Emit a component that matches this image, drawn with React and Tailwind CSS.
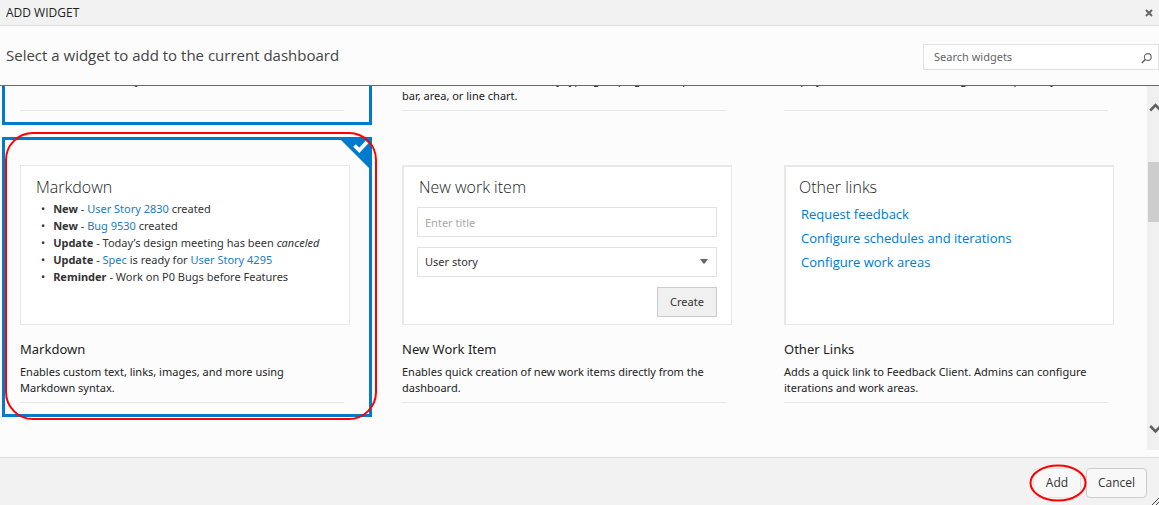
import { useLayoutEffect, useRef } from "react";

const linkClass = "text-[#1a7cc4] hover:underline";

function MarkdownPreview() {
  return (
    <div className="px-[15px] pt-[11px] text-[#333]">
      <h3 className="font-['Open_Sans'] text-base leading-5 font-light text-[#222]">Markdown</h3>
      <ul className="mt-[3px] text-[11px] leading-[17px] whitespace-nowrap [&>li]:flex [&>li]:gap-2 [&>li]:pl-[5px] [&>li]:before:content-['•']">
        <li>
          <span><b>New</b> - <a href="#story-2830" className={linkClass}>User Story 2830</a> created</span>
        </li>
        <li>
          <span><b>New</b> - <a href="#bug-9530" className={linkClass}>Bug 9530</a> created</span>
        </li>
        <li>
          <span><b>Update</b> - Today’s design meeting has been <i>canceled</i></span>
        </li>
        <li>
          <span>
            <b>Update</b> - <a href="#spec" className={linkClass}>Spec</a> is ready for{" "}
            <a href="#story-4295" className={linkClass}>User Story 4295</a>
          </span>
        </li>
        <li>
          <span><b>Reminder</b> - Work on P0 Bugs before Features</span>
        </li>
      </ul>
    </div>
  );
}

function WorkItemPreview() {
  return (
    <div className="flex flex-col pt-2.5 pr-3.5 pl-[13px] text-[11px] text-[#333]">
      <h3 className="pl-0.5 font-['Open_Sans'] text-base leading-5 font-light text-[#222]">New work item</h3>
      <input
        aria-label="Title"
        placeholder="Enter title"
        className="mt-2.5 h-[30px] border border-[#e2e2e2] bg-white px-[7px] placeholder:text-[#aaa]"
      />
      <div className="relative mt-2.5">
        <select
          aria-label="Work item type"
          className="h-[30px] w-full appearance-none border border-[#e2e2e2] bg-white px-[7px]"
        >
          <option>User story</option>
        </select>
        <svg viewBox="0 0 8 5" className="pointer-events-none absolute top-3 right-[9px] h-[5px] w-2" fill="#666">
          <path d="M0 0h8L4.6 4.4q-.6.6-1.2 0z" />
        </svg>
      </div>
      <button type="button" className="mt-2.5 h-[30px] w-[60px] self-end border border-[#ccc] bg-[#f0f0f0]">
        Create
      </button>
    </div>
  );
}

function LinksPreview() {
  return (
    <div className="px-[13px] pt-2.5 font-['Open_Sans']">
      <h3 className="text-base leading-5 font-light text-[#222]">Other links</h3>
      <ul className="mt-[5px] pl-0.5 text-[13px] leading-6 text-[#007acc]">
        <li><a href="#feedback" className="hover:underline">Request feedback</a></li>
        <li><a href="#schedules" className="hover:underline">Configure schedules and iterations</a></li>
        <li><a href="#areas" className="hover:underline">Configure work areas</a></li>
      </ul>
    </div>
  );
}

function WidgetCard({ name, description, selected, highlighted, thick, children }) {
  return (
    <article
      className={`relative flex h-[280px] flex-col border-[3px] pt-[25px] pr-[19px] pb-[11px] pl-[15px] ${
        selected ? "border-[#007acc]" : "border-transparent"
      }`}
    >
      {selected && (
        <svg viewBox="0 0 34 34" className="absolute -top-[3px] -right-[3px] size-[34px]">
          <path d="M0 0h34v34z" fill="#007acc" />
          <path d="M16.5 8.5l4.8 4.8L29 5" fill="none" stroke="#fff" strokeWidth="3.8" />
        </svg>
      )}
      <div
        className={`h-40 border-[#e8e8e8] bg-white ${
          thick ? "border-t-2 border-r border-b border-l-2" : "border"
        }`}
      >
        {children}
      </div>
      <h2 className="mt-3.5 text-[13px] leading-5 text-[#222]">{name}</h2>
      <p className="mt-[5px] mr-1.5 flex-1 border-b border-[#e6e6e6] pr-2 text-[11px] leading-4 text-[#222]">
        {description}
      </p>
      {highlighted && (
        <div className="pointer-events-none absolute -top-2 -right-2 -bottom-1.5 left-0 rounded-[28px] border-2 border-[#f00]" />
      )}
    </article>
  );
}

const widgets = [
  { name: "Build History", description: "Shows the build history.", selected: true },
  {
    name: "Chart for Work Items",
    description: "Add a tile that shows results by type, grouping, or in a pie, bar,\u00a0area, or line chart.",
    thick: true,
  },
  { name: "Code Tile", description: "Displays recent commits and changes in a repository.", thick: true },
  {
    name: "Markdown",
    description: "Enables custom text, links, images, and more using Markdown syntax.",
    selected: true,
    highlighted: true,
    preview: <MarkdownPreview />,
  },
  {
    name: "New Work Item",
    description: "Enables quick creation of new work items directly from the dashboard.",
    thick: true,
    preview: <WorkItemPreview />,
  },
  {
    name: "Other Links",
    description: "Adds a quick link to Feedback Client. Admins can configure iterations and work areas.",
    thick: true,
    preview: <LinksPreview />,
  },
];

function Scrollbar() {
  return (
    <div className="flex w-3 shrink-0 flex-col overflow-hidden bg-[#f0f0f0]" aria-hidden="true">
      <svg viewBox="0 0 12 76" className="h-[76px] w-3" fill="none" stroke="#606060" strokeWidth="2.6">
        <path d="M3.2 24.5l5.3-5.5 5.3 5.5" />
      </svg>
      <div className="ml-px h-[60px] bg-[#cdcdcd]" />
      <svg viewBox="0 0 12 28" className="mt-auto h-7 w-3" fill="none" stroke="#606060" strokeWidth="2.6">
        <path d="M3.2 4l5.3 5.5L13.8 4" />
      </svg>
    </div>
  );
}

export default function App() {
  const list = useRef(null);

  useLayoutEffect(() => {
    list.current.scrollTop = 241;
  }, []);

  return (
    <div
      role="dialog"
      aria-labelledby="dialog-title"
      className="flex h-screen flex-col overflow-hidden bg-[#fcfcfc] font-['Noto_Sans','Open_Sans',sans-serif]"
    >
      <header className="flex h-[26px] shrink-0 items-center justify-between border-b border-[#dcdcdc] bg-[#f2f2f2] pr-1.5 pl-1.5">
        <h1 id="dialog-title" className="font-['Open_Sans'] text-xs text-[#222]">ADD WIDGET</h1>
        <button type="button" aria-label="Close">
          <svg viewBox="0 0 8 8" className="size-2" stroke="#666" strokeWidth="2">
            <path d="M1 1l6 6M7 1L1 7" />
          </svg>
        </button>
      </header>

      <div className="flex h-[60px] shrink-0 items-center justify-between border-b border-[#6a6a6a] pl-1.5">
        <p className="font-['Open_Sans'] text-[15px] text-[#444]">Select a widget to add to the current dashboard</p>
        <div className="mt-0.5 flex h-[26px] w-[236px] items-center border border-[#e2e2e2] bg-white pr-1.5 pl-2.5">
          <input
            type="text"
            aria-label="Search widgets"
            placeholder="Search widgets"
            className="min-w-0 flex-1 bg-transparent pt-0.5 text-[11px] outline-none placeholder:text-[#666]"
          />
          <svg viewBox="0 0 11 11" className="mt-1 size-[11px]" fill="none" stroke="#666">
            <circle cx="6.8" cy="4" r="3.4" strokeWidth="1.1" />
            <path d="M4.4 6.4L.8 10" strokeWidth="1.5" />
          </svg>
        </div>
      </div>

      <main className="mb-[7px] flex min-h-0 flex-1">
        <div ref={list} className="min-w-0 flex-1 overflow-y-auto [scrollbar-width:none]">
          <div className="grid grid-cols-[repeat(auto-fill,370px)] gap-3 pb-[33px] pl-0.5">
            {widgets.map(({ preview, ...widget }) => (
              <WidgetCard key={widget.name} {...widget}>{preview}</WidgetCard>
            ))}
          </div>
        </div>
        <Scrollbar />
      </main>

      <footer className="relative flex h-12 shrink-0 items-start justify-end gap-[5px] border-t border-[#dcdcdc] bg-[#f2f2f2] pt-2.5 pr-3 font-['Open_Sans'] text-xs text-[#333]">
        <div className="relative">
          <button type="button" className="h-[30px] w-12 rounded-sm border border-[#e2e2e2] bg-[#f8f8f8]">
            Add
          </button>
          <svg viewBox="0 0 58 38" className="pointer-events-none absolute -top-1 -left-1 h-[38px] w-[58px]" fill="none">
            <ellipse cx="29" cy="19" rx="27.5" ry="17.5" stroke="#f00" strokeWidth="2" />
          </svg>
        </div>
        <button type="button" className="h-[30px] w-[61px] rounded-sm border border-[#ccc] bg-[#f8f8f8]">
          Cancel
        </button>
        <svg viewBox="0 0 8 8" className="absolute right-0 bottom-0 size-2" stroke="#444" strokeWidth="1">
          <path d="M1 8L8 1M5 8l3-3" />
        </svg>
      </footer>
    </div>
  );
}
